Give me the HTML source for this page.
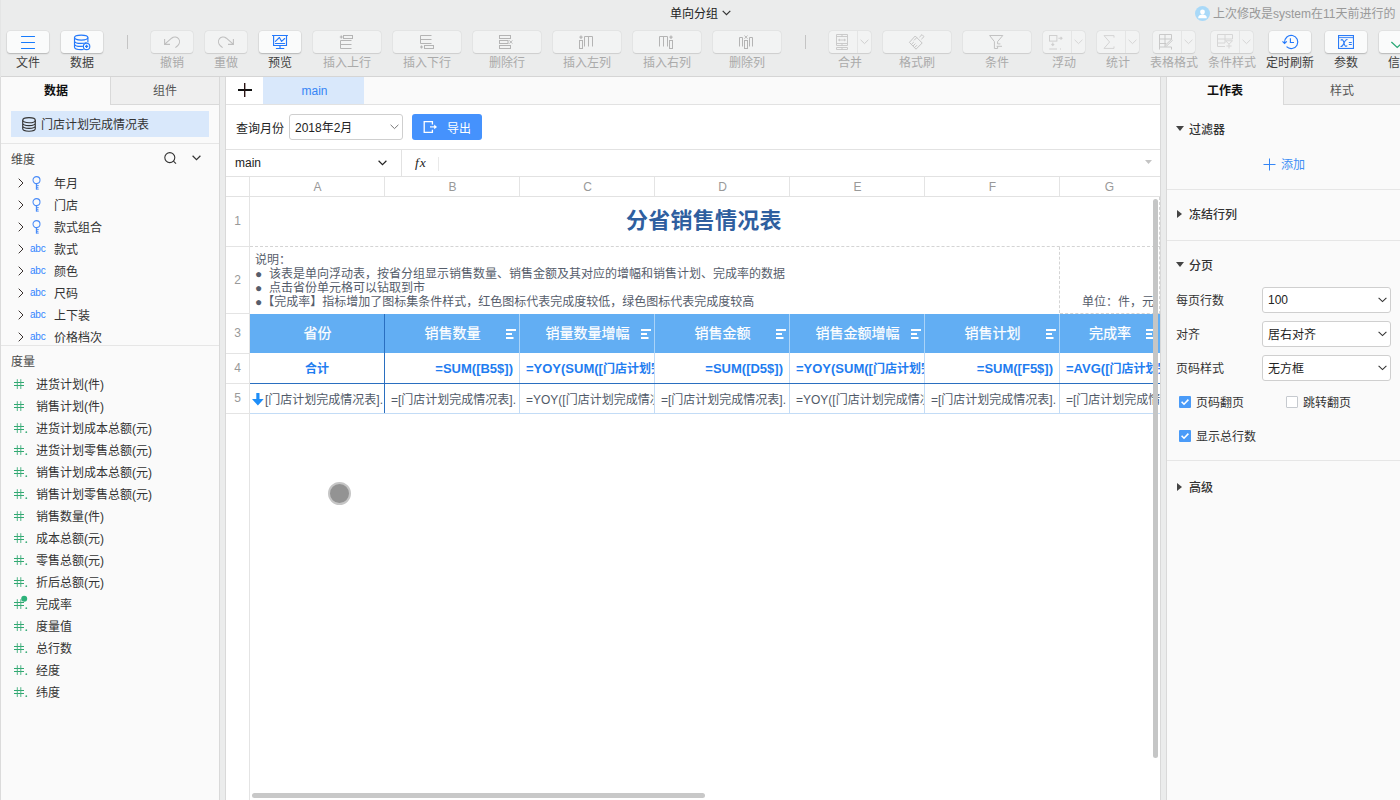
<!DOCTYPE html>
<html lang="zh-CN">
<head>
<meta charset="utf-8">
<title>单向分组</title>
<style>
*{box-sizing:border-box;margin:0;padding:0}
html,body{width:1400px;height:800px;overflow:hidden}
body{position:relative;background:#ebecec;font-family:"Liberation Sans","Noto Sans CJK SC",sans-serif;font-size:12px;color:#333;line-height:1}
.abs{position:absolute}
svg{display:block;overflow:visible}
/* ---------- title bar ---------- */
#title{position:absolute;left:670px;top:7px;font-size:12px;line-height:14px;color:#222;white-space:nowrap}
#lastmod{position:absolute;left:1213px;top:7px;font-size:12px;line-height:14px;color:#999;white-space:nowrap}
#avatar{position:absolute;left:1195px;top:6px;width:15px;height:15px;border-radius:50%;background:#a9d9f8;overflow:hidden}
/* ---------- toolbar ---------- */
.tb{position:absolute;top:30px;height:24px}
.tb::before{content:"";position:absolute;left:0;right:0;top:1px;height:22px;border-radius:3px;background:#f2f3f3;box-shadow:0 0 0 .5px rgba(0,0,0,.05),0 .5px 1px rgba(0,0,0,.10)}
.tb.on::before{background:#fafbfb;box-shadow:0 0 0 .5px rgba(0,0,0,.07),0 1px 1.5px rgba(0,0,0,.20)}
.tb svg{position:absolute;left:50%;top:50%}
.tl{position:absolute;top:56px;height:14px;line-height:14px;font-size:12px;color:#aaa;text-align:center;white-space:nowrap;transform:translateX(-50%)}
.tl.on{color:#404040}
.tsep{position:absolute;top:35px;width:1px;height:14px;background:#c4c4c4}
.split{position:absolute;top:1px;height:22px;width:1px;background:#e4e5e5}
#tbline{position:absolute;left:0;top:76px;width:1400px;height:1px;background:#d5d5d5}
/* ---------- panels ---------- */
#left{position:absolute;left:0;top:77px;width:220px;height:723px;background:#fafafa}
#center{position:absolute;left:225px;top:77px;width:936px;height:723px;background:#fff}
.nt{margin-top:1px;line-height:14px;font-size:12px;color:#565d6b;white-space:nowrap}
.hd{height:39px;line-height:38px;text-align:center;color:#fff;font-size:14px;white-space:nowrap;-webkit-text-stroke:.25px #fff}
.r4{height:29px;line-height:29px;font-size:13px;font-weight:bold;color:#1f7df0;white-space:nowrap;overflow:hidden;padding:0 6px}
.r4 i{font-style:normal;font-size:12px}
.r5{height:30px;line-height:33px;font-size:12px;color:#505a68;white-space:nowrap;overflow:hidden}
#right{position:absolute;left:1166px;top:77px;width:234px;height:723px;background:#fafafa}
.sec{line-height:14px;font-size:12px;color:#333;font-weight:500;margin-top:1px}
.sel{width:129px;height:26px;border:1px solid #cfcfcf;border-radius:3px;background:#fff;line-height:24px;padding-left:5px;color:#222}
.sel.cj{padding-top:1px}
.ptab{position:absolute;top:0;height:28px;line-height:29px;text-align:center;font-size:12px;color:#555}
.ptab.act{font-weight:bold;color:#111}
.ptab.off{background:#efefef;border-left:1px solid #d9d9d9;border-bottom:1px solid #d9d9d9}
[style*="line-height:14px"]{margin-top:1px}
.lat{margin-top:0 !important}
.hline{position:absolute;height:1px;background:#e6e6e6}
.vline{position:absolute;width:1px;background:#e6e6e6}
</style>
</head>
<body>
<!-- TITLE BAR -->
<div id="title">单向分组</div>
<svg class="abs" style="left:722px;top:10px" width="9" height="6" viewBox="0 0 9 6"><path d="M0.7 0.8 L4.5 4.6 L8.3 0.8" fill="none" stroke="#333" stroke-width="1.2"/></svg>
<div id="avatar"><svg width="15" height="15" viewBox="0 0 15 15"><circle cx="7.5" cy="6" r="2.4" fill="#fff"/><path d="M3.2 12.2 C3.2 9.4 5.4 8.6 7.5 8.6 C9.6 8.6 11.8 9.4 11.8 12.2 Z" fill="#fff"/></svg></div>
<div id="lastmod">上次修改是system在11天前进行的</div>

<!-- TOOLBAR -->
<div id="toolbar">
<!-- 文件 -->
<div class="tb on" style="left:7px;width:42px"><svg style="left:14px;top:5px" width="14" height="14" viewBox="0 0 14 14"><path d="M0.5 1.5H13.5M0.5 7.5H13.5M0.5 13.5H13.5" stroke="#167bfd" stroke-width="1.2" stroke-linecap="round" fill="none"/></svg></div>
<div class="tl on" style="left:28px">文件</div>
<!-- 数据 -->
<div class="tb on" style="left:61px;width:42px"><svg style="left:13px;top:4px" width="17" height="17" viewBox="0 0 17 17" fill="none" stroke="#2479fb" stroke-width="1.15"><ellipse cx="7.2" cy="3.6" rx="6.7" ry="2.5"/><path d="M0.5 3.6V13C0.5 14.5 3.4 15.6 7.2 15.6C8 15.6 8.8 15.55 9.6 15.45M13.9 3.6V8.6M0.5 6.9C0.5 8.4 3.4 9.4 7.2 9.4C9.4 9.4 11.4 9.05 12.6 8.5M0.5 9.9C0.5 11.4 3.4 12.4 7.2 12.4C7.9 12.4 8.6 12.36 9.2 12.3"/><circle cx="12.6" cy="12.4" r="3.2" fill="#fafbfb"/><path d="M12.6 10.8V14M11 12.4H14.2" stroke-width="1.3"/></svg></div>
<div class="tl on" style="left:82px">数据</div>
<div class="tsep" style="left:127px"></div>
<!-- 撤销 -->
<div class="tb" style="left:151px;width:42px"><svg style="left:13px;top:6px" width="16" height="12" viewBox="0 0 16 12" fill="none" stroke="#bfbfbf" stroke-width="1.1"><path d="M0.6 3V8.4H6M0.8 8.2L7.6 2.2C9.8 0.4 13 0.6 14.6 2.8C16.2 5 15.6 8 13.6 9.8L11.4 11.6"/></svg></div>
<div class="tl" style="left:172px">撤销</div>
<!-- 重做 -->
<div class="tb" style="left:205px;width:42px"><svg style="left:13px;top:6px" width="16" height="12" viewBox="0 0 16 12" fill="none" stroke="#bfbfbf" stroke-width="1.1"><path d="M15.4 3V8.4H10M15.2 8.2L8.4 2.2C6.2 0.4 3 0.6 1.4 2.8C-0.2 5 0.4 8 2.4 9.8L4.6 11.6"/></svg></div>
<div class="tl" style="left:226px">重做</div>
<!-- 预览 -->
<div class="tb on" style="left:259px;width:42px"><svg style="left:13px;top:5px" width="16" height="14" viewBox="0 0 16 14" fill="none" stroke="#2479fb" stroke-width="1.15" stroke-linecap="round"><path d="M0.5 0.5H15.5M1.6 0.5V10.5H14.5V0.5M3.4 8.5H12.6M8 10.5V13.5M4.4 13.5H11.8"/><path d="M3.4 6.4L7.4 2.5L9.6 6.4L12.7 3.5" stroke-width="1.1" stroke-linejoin="round"/></svg></div>
<div class="tl on" style="left:280px">预览</div>
<!-- 插入上行 -->
<div class="tb" style="left:313px;width:68px"><svg style="left:27px;top:5px" width="14" height="14" viewBox="0 0 14 14" fill="none" stroke="#b4b4b4" stroke-width="1"><rect x="3.5" y="0.5" width="9" height="3"/><path d="M-0.2 2H2.8M1.3 0.5V3.5" stroke-width="1.2"/><path d="M11.5 5.5H0.5V13.5H11.5M0.5 9.5H11.5"/></svg></div>
<div class="tl" style="left:347px">插入上行</div>
<!-- 插入下行 -->
<div class="tb" style="left:393px;width:68px"><svg style="left:27px;top:5px" width="14" height="14" viewBox="0 0 14 14" fill="none" stroke="#b4b4b4" stroke-width="1"><rect x="4.5" y="10.5" width="9" height="3"/><path d="M0 12H3M1.5 10.5V13.5" stroke-width="1.2"/><path d="M11.5 0.5H0.5V8.5H11.5M0.5 4.5H11.5"/></svg></div>
<div class="tl" style="left:427px">插入下行</div>
<!-- 删除行 -->
<div class="tb" style="left:473px;width:68px"><svg style="left:26px;top:5px" width="14" height="14" viewBox="0 0 14 14" fill="none" stroke="#b4b4b4" stroke-width="1"><rect x="0.5" y="0.5" width="11" height="3"/><rect x="0.5" y="5.5" width="8.5" height="3"/><rect x="0.5" y="10.5" width="11" height="3"/><path d="M10.4 5.4L13.4 8.6M13.4 5.4L10.4 8.6" stroke-width="0.9"/></svg></div>
<div class="tl" style="left:507px">删除行</div>
<!-- 插入左列 -->
<div class="tb" style="left:553px;width:68px"><svg style="left:26px;top:5px" width="14" height="14" viewBox="0 0 14 14" fill="none" stroke="#b4b4b4" stroke-width="1"><rect x="0.5" y="5.5" width="3" height="8"/><path d="M0.4 2.2H3.6M2 0.5V3.9" stroke-width="1.2"/><path d="M5.5 11.5V1.5H13.5V11.5M9.5 1.5V11.5"/></svg></div>
<div class="tl" style="left:587px">插入左列</div>
<!-- 插入右列 -->
<div class="tb" style="left:633px;width:68px"><svg style="left:26px;top:5px" width="14" height="14" viewBox="0 0 14 14" fill="none" stroke="#b4b4b4" stroke-width="1"><rect x="10.5" y="5.5" width="3" height="8"/><path d="M10.4 2.2H13.6M12 0.5V3.9" stroke-width="1.2"/><path d="M0.5 11.5V1.5H8.5V11.5M4.5 1.5V11.5"/></svg></div>
<div class="tl" style="left:667px">插入右列</div>
<!-- 删除列 -->
<div class="tb" style="left:713px;width:68px"><svg style="left:26px;top:5px" width="14" height="14" viewBox="0 0 14 14" fill="none" stroke="#b4b4b4" stroke-width="1"><path d="M0.5 11.5V2.5H3.5V11.5M10.5 11.5V2.5H13.5V11.5"/><rect x="5.5" y="5.5" width="3" height="8"/><path d="M5.5 0.5L8.5 3.7M8.5 0.5L5.5 3.7" stroke-width="0.9"/></svg></div>
<div class="tl" style="left:747px">删除列</div>
<div class="tsep" style="left:805px"></div>
<!-- 合并 -->
<div class="tb" style="left:829px;width:42px"><div class="split" style="left:28px"></div><svg style="left:7px;top:4px" width="12" height="16" viewBox="0 0 12 16" fill="none" stroke="#c6c6c6" stroke-width="0.9"><path d="M0.5 0.5H11.5V11.5H0.5ZM0.5 2.5H11.5M0.5 9.5H11.5M6 0.5V2.5M6 9.5V11.5M0.5 13.5H11.5V15.5H0.5ZM6 13.5V15.5M3.4 6H8.6"/><path d="M3.8 4.4L1.9 6L3.8 7.6ZM8.2 4.4L10.1 6L8.2 7.6Z" fill="#c6c6c6" stroke="none"/></svg><svg style="left:31px;top:9px" width="9" height="6" viewBox="0 0 9 6"><path d="M0.6 0.8L4.5 4.6L8.4 0.8" fill="none" stroke="#cfcfcf" stroke-width="1"/></svg></div>
<div class="tl" style="left:850px">合并</div>
<!-- 格式刷 -->
<div class="tb" style="left:883px;width:68px"><svg style="left:26px;top:4px" width="16" height="16" viewBox="0 0 16 16" fill="none" stroke="#c2c2c2" stroke-width="0.95" stroke-linejoin="round"><path d="M10.4 3.2L13 0.6L15 2.6L12.4 5.2M6.2 2L13.2 9L7 15.2L0.4 8.4ZM7.8 3.6L5 6.4M2.4 10.4L4.8 8M4 12L6.4 9.6M5.6 13.6L8 11.2"/></svg></div>
<div class="tl" style="left:917px">格式刷</div>
<!-- 条件 -->
<div class="tb" style="left:963px;width:68px"><svg style="left:26px;top:5px" width="15" height="15" viewBox="0 0 15 15" fill="none" stroke="#c2c2c2" stroke-width="1"><path d="M0.6 0.5H13.8L8.6 6.6V8.9H11.4M5.4 6.6L0.6 0.5M5.4 6.6V13.5H8.6V11.3M7.6 11.3H13"/></svg></div>
<div class="tl" style="left:997px">条件</div>
<!-- 浮动 -->
<div class="tb" style="left:1043px;width:42px"><div class="split" style="left:28px"></div><svg style="left:6px;top:5px" width="14" height="15" viewBox="0 0 14 15" fill="none" stroke="#cfcfcf" stroke-width="1"><rect x="0.5" y="0.5" width="7.4" height="5.6"/><path d="M9.4 3.3H13M11.6 1.9L13 3.3L11.6 4.7M3.8 7.4V10.4M2.4 9.1L3.8 10.5L5.2 9.1" stroke-width="1.1"/><path d="M0.3 14H8M11 14H12" stroke-width="1.1"/></svg><svg style="left:31px;top:9px" width="9" height="6" viewBox="0 0 9 6"><path d="M0.6 0.8L4.5 4.6L8.4 0.8" fill="none" stroke="#d6d6d6" stroke-width="1"/></svg></div>
<div class="tl" style="left:1064px">浮动</div>
<!-- 统计 -->
<div class="tb" style="left:1097px;width:42px"><div class="split" style="left:28px"></div><svg style="left:6px;top:5px" width="12" height="14" viewBox="0 0 12 14" fill="none" stroke="#d4d4d4" stroke-width="1"><path d="M11 2.6V0.6H1L6.6 7L1 13.4H11V11.4"/></svg><svg style="left:31px;top:9px" width="9" height="6" viewBox="0 0 9 6"><path d="M0.6 0.8L4.5 4.6L8.4 0.8" fill="none" stroke="#d6d6d6" stroke-width="1"/></svg></div>
<div class="tl" style="left:1118px">统计</div>
<!-- 表格格式 -->
<div class="tb" style="left:1153px;width:42px"><div class="split" style="left:28px"></div><svg style="left:6px;top:4px" width="14" height="16" viewBox="0 0 14 16" fill="none" stroke="#c6c6c6" stroke-width="0.95"><path d="M0.5 15.5V0.5H12.5V5M0.5 5H12.5M0.5 9.5H7M0.5 13H12.5V15.5M6 0.5V13M6.5 11L12.4 5.4L13.4 6.4L7.6 12Z"/></svg><svg style="left:31px;top:9px" width="9" height="6" viewBox="0 0 9 6"><path d="M0.6 0.8L4.5 4.6L8.4 0.8" fill="none" stroke="#d6d6d6" stroke-width="1"/></svg></div>
<div class="tl" style="left:1174px">表格格式</div>
<!-- 条件样式 -->
<div class="tb" style="left:1211px;width:42px"><div class="split" style="left:28px"></div><svg style="left:6px;top:4px" width="16" height="15" viewBox="0 0 16 15" fill="none" stroke="#d6d6d6" stroke-width="1"><path d="M0.5 12.5V0.5H15.5V5M0.5 5H15.5M0.5 9H8M0.5 12.5H8M8 0.5V9M8.6 6.8H15.5M8.6 6.8L12 10.2V14.5M15.5 6.8L12 10.2M9.4 12H14.6"/></svg><svg style="left:31px;top:9px" width="9" height="6" viewBox="0 0 9 6"><path d="M0.6 0.8L4.5 4.6L8.4 0.8" fill="none" stroke="#d6d6d6" stroke-width="1"/></svg></div>
<div class="tl" style="left:1232px">条件样式</div>
<!-- 定时刷新 -->
<div class="tb on" style="left:1269px;width:42px"><svg style="left:13px;top:4px" width="17" height="16" viewBox="0 0 17 16" fill="none" stroke="#2479fb" stroke-width="1.15"><path d="M2.6 8.4A6.6 6.6 0 1 1 4.53 12.67M0.5 7.3L2.6 9.4L4.8 7.3M8.4 4.2V8.5H12"/></svg></div>
<div class="tl on" style="left:1290px">定时刷新</div>
<!-- 参数 -->
<div class="tb on" style="left:1325px;width:42px"><svg style="left:13px;top:5px" width="16" height="14" viewBox="0 0 16 14" fill="none" stroke="#2b7cf7" stroke-width="1.1"><rect x="0.55" y="0.55" width="14.9" height="12.9"/><path d="M0.6 2.6H15.4" stroke-width="0.9"/><path d="M2.7 5.3C4.5 3.7 5.4 5.4 6 8C6.6 10.6 7.5 12.3 9.3 10.7M9.5 4.5C7.6 4.1 6.8 6 6 8C5.2 10 4.4 11.9 2.5 11.5" stroke-width="1.1"/><path d="M10.8 7.5H13.8M10.8 9.5H13.8" stroke-width="1"/></svg></div>
<div class="tl on" style="left:1346px">参数</div>
<!-- 信息 -->
<div class="tb on" style="left:1379px;width:42px"><svg style="left:12px;top:11px" width="13" height="8" viewBox="0 0 13 8" fill="none" stroke="#2aa876" stroke-width="1.3"><path d="M0.4 1L6.2 6.4L12 1"/></svg></div>
<div class="tl on" style="left:1400px">信息</div>
</div>
<div id="tbline"></div>
<div class="abs" style="left:0;top:0;width:1px;height:77px;background:#e4e5e5"></div>

<!-- LEFT PANEL -->
<div id="left">
<div class="vline" style="left:0;top:0;height:723px;background:#dbdbdb"></div><div class="vline" style="left:219px;top:0;height:723px;background:#d9d9d9"></div>
<div class="ptab act" style="left:1px;width:110px">数据</div><div class="ptab off" style="left:110px;width:109px">组件</div>
<div class="abs" style="left:11px;top:34px;width:198px;height:26px;background:#d9e8fb"></div>
<svg class="abs" style="left:22px;top:40px" width="14" height="15" viewBox="0 0 14 15" fill="none" stroke="#333" stroke-width="1.1"><ellipse cx="7" cy="3.2" rx="6.3" ry="2.6"/><path d="M0.7 3.2V11.6C0.7 13.1 3.5 14.3 7 14.3C10.5 14.3 13.3 13.1 13.3 11.6V3.2M0.7 6C0.7 7.5 3.5 8.6 7 8.6C10.5 8.6 13.3 7.5 13.3 6M0.7 8.8C0.7 10.3 3.5 11.4 7 11.4C10.5 11.4 13.3 10.3 13.3 8.8"/></svg>
<div class="abs" style="left:41px;top:40px;line-height:14px;color:#333">门店计划完成情况表</div>
<div class="hline" style="left:1px;top:66px;width:218px"></div>
<div class="abs" style="left:11px;top:75px;line-height:14px;color:#4a4a4a">维度</div>
<svg class="abs" style="left:164px;top:75px" width="13" height="12" viewBox="0 0 13 12" fill="none" stroke="#333" stroke-width="1.1"><circle cx="5.8" cy="5.6" r="5"/><path d="M9.4 9.2L12 11.6"/></svg>
<svg class="abs" style="left:192px;top:78px" width="9" height="6" viewBox="0 0 9 6"><path d="M0.6 0.8L4.5 4.6L8.4 0.8" fill="none" stroke="#333" stroke-width="1.2"/></svg>
<svg class="abs" style="left:18px;top:101px" width="6" height="10" viewBox="0 0 6 10"><path d="M0.7 0.7L5 5L0.7 9.3" fill="none" stroke="#3a3230" stroke-width="1"/></svg>
<svg class="abs" style="left:32px;top:99px" width="9" height="14" viewBox="0 0 9 14" fill="none" stroke="#4a8cf8" stroke-width="1.05"><circle cx="4.5" cy="4.1" r="3.5"/><path d="M4.5 7.6V13.6" stroke-width="1.3"/><path d="M4.5 9.6H6.8M4.5 11.4H6.4M4.5 13.1H6.8" stroke-width="0.9"/></svg>
<div class="abs" style="left:54px;top:99px;line-height:14px;color:#333">年月</div>
<svg class="abs" style="left:18px;top:123px" width="6" height="10" viewBox="0 0 6 10"><path d="M0.7 0.7L5 5L0.7 9.3" fill="none" stroke="#3a3230" stroke-width="1"/></svg>
<svg class="abs" style="left:32px;top:121px" width="9" height="14" viewBox="0 0 9 14" fill="none" stroke="#4a8cf8" stroke-width="1.05"><circle cx="4.5" cy="4.1" r="3.5"/><path d="M4.5 7.6V13.6" stroke-width="1.3"/><path d="M4.5 9.6H6.8M4.5 11.4H6.4M4.5 13.1H6.8" stroke-width="0.9"/></svg>
<div class="abs" style="left:54px;top:121px;line-height:14px;color:#333">门店</div>
<svg class="abs" style="left:18px;top:145px" width="6" height="10" viewBox="0 0 6 10"><path d="M0.7 0.7L5 5L0.7 9.3" fill="none" stroke="#3a3230" stroke-width="1"/></svg>
<svg class="abs" style="left:32px;top:143px" width="9" height="14" viewBox="0 0 9 14" fill="none" stroke="#4a8cf8" stroke-width="1.05"><circle cx="4.5" cy="4.1" r="3.5"/><path d="M4.5 7.6V13.6" stroke-width="1.3"/><path d="M4.5 9.6H6.8M4.5 11.4H6.4M4.5 13.1H6.8" stroke-width="0.9"/></svg>
<div class="abs" style="left:54px;top:143px;line-height:14px;color:#333">款式组合</div>
<svg class="abs" style="left:18px;top:167px" width="6" height="10" viewBox="0 0 6 10"><path d="M0.7 0.7L5 5L0.7 9.3" fill="none" stroke="#3a3230" stroke-width="1"/></svg>
<div class="abs lat" style="left:30px;top:165px;line-height:14px;font-size:10px;color:#3385ff;letter-spacing:-0.2px">abc</div>
<div class="abs" style="left:54px;top:165px;line-height:14px;color:#333">款式</div>
<svg class="abs" style="left:18px;top:189px" width="6" height="10" viewBox="0 0 6 10"><path d="M0.7 0.7L5 5L0.7 9.3" fill="none" stroke="#3a3230" stroke-width="1"/></svg>
<div class="abs lat" style="left:30px;top:187px;line-height:14px;font-size:10px;color:#3385ff;letter-spacing:-0.2px">abc</div>
<div class="abs" style="left:54px;top:187px;line-height:14px;color:#333">颜色</div>
<svg class="abs" style="left:18px;top:211px" width="6" height="10" viewBox="0 0 6 10"><path d="M0.7 0.7L5 5L0.7 9.3" fill="none" stroke="#3a3230" stroke-width="1"/></svg>
<div class="abs lat" style="left:30px;top:209px;line-height:14px;font-size:10px;color:#3385ff;letter-spacing:-0.2px">abc</div>
<div class="abs" style="left:54px;top:209px;line-height:14px;color:#333">尺码</div>
<svg class="abs" style="left:18px;top:233px" width="6" height="10" viewBox="0 0 6 10"><path d="M0.7 0.7L5 5L0.7 9.3" fill="none" stroke="#3a3230" stroke-width="1"/></svg>
<div class="abs lat" style="left:30px;top:231px;line-height:14px;font-size:10px;color:#3385ff;letter-spacing:-0.2px">abc</div>
<div class="abs" style="left:54px;top:231px;line-height:14px;color:#333">上下装</div>
<svg class="abs" style="left:18px;top:255px" width="6" height="10" viewBox="0 0 6 10"><path d="M0.7 0.7L5 5L0.7 9.3" fill="none" stroke="#3a3230" stroke-width="1"/></svg>
<div class="abs lat" style="left:30px;top:253px;line-height:14px;font-size:10px;color:#3385ff;letter-spacing:-0.2px">abc</div>
<div class="abs" style="left:54px;top:253px;line-height:14px;color:#333">价格档次</div>
<div class="hline" style="left:1px;top:268px;width:218px"></div>
<div class="abs" style="left:11px;top:277px;line-height:14px;color:#4a4a4a">度量</div>
<svg class="abs" style="left:14px;top:302px" width="14" height="10" viewBox="0 0 14 10" fill="none" stroke="#3fae7c" stroke-width="1.1"><path d="M0 3.5H10M0 6.5H10" stroke="#2fa870"/><path d="M3.3 0.2V10M6.8 0.2V10" stroke-width="0.9"/></svg>
<div class="abs" style="left:36px;top:300px;line-height:14px;color:#333">进货计划(件)</div>
<svg class="abs" style="left:14px;top:324px" width="14" height="10" viewBox="0 0 14 10" fill="none" stroke="#3fae7c" stroke-width="1.1"><path d="M0 3.5H10M0 6.5H10" stroke="#2fa870"/><path d="M3.3 0.2V10M6.8 0.2V10" stroke-width="0.9"/></svg>
<div class="abs" style="left:36px;top:322px;line-height:14px;color:#333">销售计划(件)</div>
<svg class="abs" style="left:14px;top:346px" width="14" height="10" viewBox="0 0 14 10" fill="none" stroke="#3fae7c" stroke-width="1.1"><path d="M0 3.5H10M0 6.5H10" stroke="#2fa870"/><path d="M3.3 0.2V10M6.8 0.2V10" stroke-width="0.9"/><circle cx="12.3" cy="9.2" r="0.9" fill="#3fae7c" stroke="none"/></svg>
<div class="abs" style="left:36px;top:344px;line-height:14px;color:#333">进货计划成本总额(元)</div>
<svg class="abs" style="left:14px;top:368px" width="14" height="10" viewBox="0 0 14 10" fill="none" stroke="#3fae7c" stroke-width="1.1"><path d="M0 3.5H10M0 6.5H10" stroke="#2fa870"/><path d="M3.3 0.2V10M6.8 0.2V10" stroke-width="0.9"/><circle cx="12.3" cy="9.2" r="0.9" fill="#3fae7c" stroke="none"/></svg>
<div class="abs" style="left:36px;top:366px;line-height:14px;color:#333">进货计划零售总额(元)</div>
<svg class="abs" style="left:14px;top:390px" width="14" height="10" viewBox="0 0 14 10" fill="none" stroke="#3fae7c" stroke-width="1.1"><path d="M0 3.5H10M0 6.5H10" stroke="#2fa870"/><path d="M3.3 0.2V10M6.8 0.2V10" stroke-width="0.9"/><circle cx="12.3" cy="9.2" r="0.9" fill="#3fae7c" stroke="none"/></svg>
<div class="abs" style="left:36px;top:388px;line-height:14px;color:#333">销售计划成本总额(元)</div>
<svg class="abs" style="left:14px;top:412px" width="14" height="10" viewBox="0 0 14 10" fill="none" stroke="#3fae7c" stroke-width="1.1"><path d="M0 3.5H10M0 6.5H10" stroke="#2fa870"/><path d="M3.3 0.2V10M6.8 0.2V10" stroke-width="0.9"/><circle cx="12.3" cy="9.2" r="0.9" fill="#3fae7c" stroke="none"/></svg>
<div class="abs" style="left:36px;top:410px;line-height:14px;color:#333">销售计划零售总额(元)</div>
<svg class="abs" style="left:14px;top:434px" width="14" height="10" viewBox="0 0 14 10" fill="none" stroke="#3fae7c" stroke-width="1.1"><path d="M0 3.5H10M0 6.5H10" stroke="#2fa870"/><path d="M3.3 0.2V10M6.8 0.2V10" stroke-width="0.9"/></svg>
<div class="abs" style="left:36px;top:432px;line-height:14px;color:#333">销售数量(件)</div>
<svg class="abs" style="left:14px;top:456px" width="14" height="10" viewBox="0 0 14 10" fill="none" stroke="#3fae7c" stroke-width="1.1"><path d="M0 3.5H10M0 6.5H10" stroke="#2fa870"/><path d="M3.3 0.2V10M6.8 0.2V10" stroke-width="0.9"/><circle cx="12.3" cy="9.2" r="0.9" fill="#3fae7c" stroke="none"/></svg>
<div class="abs" style="left:36px;top:454px;line-height:14px;color:#333">成本总额(元)</div>
<svg class="abs" style="left:14px;top:478px" width="14" height="10" viewBox="0 0 14 10" fill="none" stroke="#3fae7c" stroke-width="1.1"><path d="M0 3.5H10M0 6.5H10" stroke="#2fa870"/><path d="M3.3 0.2V10M6.8 0.2V10" stroke-width="0.9"/><circle cx="12.3" cy="9.2" r="0.9" fill="#3fae7c" stroke="none"/></svg>
<div class="abs" style="left:36px;top:476px;line-height:14px;color:#333">零售总额(元)</div>
<svg class="abs" style="left:14px;top:500px" width="14" height="10" viewBox="0 0 14 10" fill="none" stroke="#3fae7c" stroke-width="1.1"><path d="M0 3.5H10M0 6.5H10" stroke="#2fa870"/><path d="M3.3 0.2V10M6.8 0.2V10" stroke-width="0.9"/><circle cx="12.3" cy="9.2" r="0.9" fill="#3fae7c" stroke="none"/></svg>
<div class="abs" style="left:36px;top:498px;line-height:14px;color:#333">折后总额(元)</div>
<svg class="abs" style="left:14px;top:522px" width="14" height="10" viewBox="0 0 14 10" fill="none" stroke="#3fae7c" stroke-width="1.1"><path d="M0 3.5H10M0 6.5H10" stroke="#2fa870"/><path d="M3.3 0.2V10M6.8 0.2V10" stroke-width="0.9"/><circle cx="12.3" cy="9.2" r="0.9" fill="#3fae7c" stroke="none"/><circle cx="10.2" cy="-0.2" r="3" fill="#2db27a" stroke="none"/></svg>
<div class="abs" style="left:36px;top:520px;line-height:14px;color:#333">完成率</div>
<svg class="abs" style="left:14px;top:544px" width="14" height="10" viewBox="0 0 14 10" fill="none" stroke="#3fae7c" stroke-width="1.1"><path d="M0 3.5H10M0 6.5H10" stroke="#2fa870"/><path d="M3.3 0.2V10M6.8 0.2V10" stroke-width="0.9"/><circle cx="12.3" cy="9.2" r="0.9" fill="#3fae7c" stroke="none"/></svg>
<div class="abs" style="left:36px;top:542px;line-height:14px;color:#333">度量值</div>
<svg class="abs" style="left:14px;top:566px" width="14" height="10" viewBox="0 0 14 10" fill="none" stroke="#3fae7c" stroke-width="1.1"><path d="M0 3.5H10M0 6.5H10" stroke="#2fa870"/><path d="M3.3 0.2V10M6.8 0.2V10" stroke-width="0.9"/><circle cx="12.3" cy="9.2" r="0.9" fill="#3fae7c" stroke="none"/></svg>
<div class="abs" style="left:36px;top:564px;line-height:14px;color:#333">总行数</div>
<svg class="abs" style="left:14px;top:588px" width="14" height="10" viewBox="0 0 14 10" fill="none" stroke="#3fae7c" stroke-width="1.1"><path d="M0 3.5H10M0 6.5H10" stroke="#2fa870"/><path d="M3.3 0.2V10M6.8 0.2V10" stroke-width="0.9"/><circle cx="12.3" cy="9.2" r="0.9" fill="#3fae7c" stroke="none"/></svg>
<div class="abs" style="left:36px;top:586px;line-height:14px;color:#333">经度</div>
<svg class="abs" style="left:14px;top:610px" width="14" height="10" viewBox="0 0 14 10" fill="none" stroke="#3fae7c" stroke-width="1.1"><path d="M0 3.5H10M0 6.5H10" stroke="#2fa870"/><path d="M3.3 0.2V10M6.8 0.2V10" stroke-width="0.9"/><circle cx="12.3" cy="9.2" r="0.9" fill="#3fae7c" stroke="none"/></svg>
<div class="abs" style="left:36px;top:608px;line-height:14px;color:#333">纬度</div>
</div>

<!-- CENTER PANEL -->
<div id="center">
<div class="vline" style="left:0;top:0;height:723px;background:#d9d9d9"></div><div class="vline" style="left:935px;top:0;height:723px;background:#d9d9d9"></div>
<div class="abs" style="left:1px;top:0;width:934px;height:27px;background:#fafafa"></div>
<div class="abs" style="left:1px;top:0;width:37px;height:27px;background:#fff"></div>
<svg class="abs" style="left:13px;top:6px" width="14" height="14" viewBox="0 0 14 14"><path d="M0 7H14" stroke="#111" stroke-width="2" fill="none"/><path d="M6.7 0V14" stroke="#2a1414" stroke-width="1.4" fill="none"/></svg>
<div class="abs" style="left:38px;top:0;width:101px;height:27px;background:#d9e8fb;color:#3585f6;text-align:center;padding-left:2px;line-height:28px;font-size:12px">main</div>
<div class="hline" style="left:1px;top:27px;width:934px;background:#e2e2e2"></div>
<div class="abs" style="left:11px;top:44px;line-height:14px;color:#222">查询月份</div>
<div class="abs" style="left:64px;top:37px;width:114px;height:26px;border:1px solid #cfcfcf;border-radius:3px;background:#fff;line-height:27px;padding-left:5px;color:#222">2018年2月<svg class="abs" style="left:100px;top:9px" width="9" height="6" viewBox="0 0 9 6"><path d="M0.6 0.8L4.5 4.6L8.4 0.8" fill="none" stroke="#777" stroke-width="1"/></svg></div>
<div class="abs" style="left:187px;top:37px;width:70px;height:26px;border-radius:3px;background:#4592fd;color:#fff;line-height:26px"><svg class="abs" style="left:11px;top:7px" width="15" height="13" viewBox="0 0 15 13" fill="none" stroke="#fff" stroke-width="1.3"><path d="M9.4 3.4V0.7H1.2V11.4H9.4V8.8"/><path d="M7 5.9H12" stroke-width="1.2"/><path d="M11.2 3.6L14 5.9L11.2 8.2Z" fill="#fff" stroke="none"/></svg><span class="abs" style="left:35px;top:2px">导出</span></div>
<div class="hline" style="left:1px;top:72px;width:934px;background:#e2e2e2"></div>
<div class="abs lat" style="left:10px;top:79px;line-height:14px;color:#222">main</div>
<svg class="abs" style="left:153px;top:83px" width="9" height="6" viewBox="0 0 9 6"><path d="M0.6 0.8L4.5 4.6L8.4 0.8" fill="none" stroke="#222" stroke-width="1.2"/></svg>
<div class="vline" style="left:176px;top:73px;height:26px;background:#e2e2e2"></div>
<div class="abs" style="left:190px;top:78px;line-height:16px;font-size:13.5px;letter-spacing:1px;font-style:italic;font-family:'Liberation Serif',serif;color:#222">fx</div>
<div class="vline" style="left:213px;top:80px;height:14px;background:#e9e9e9"></div>
<svg class="abs" style="left:920px;top:83px" width="7" height="4" viewBox="0 0 7 4"><path d="M0 0H7L3.5 4Z" fill="#c4c4c4"/></svg>
<div class="hline" style="left:1px;top:99px;width:934px;background:#e2e2e2"></div>
<div class="abs lat" style="left:82.5px;top:103px;width:20px;text-align:center;line-height:14px;color:#999;font-size:12px">A</div>
<div class="abs lat" style="left:217.5px;top:103px;width:20px;text-align:center;line-height:14px;color:#999;font-size:12px">B</div>
<div class="abs lat" style="left:352.5px;top:103px;width:20px;text-align:center;line-height:14px;color:#999;font-size:12px">C</div>
<div class="abs lat" style="left:487.5px;top:103px;width:20px;text-align:center;line-height:14px;color:#999;font-size:12px">D</div>
<div class="abs lat" style="left:622.5px;top:103px;width:20px;text-align:center;line-height:14px;color:#999;font-size:12px">E</div>
<div class="abs lat" style="left:757.5px;top:103px;width:20px;text-align:center;line-height:14px;color:#999;font-size:12px">F</div>
<div class="abs lat" style="left:874.5px;top:103px;width:20px;text-align:center;line-height:14px;color:#999;font-size:12px">G</div>
<div class="vline" style="left:24px;top:100px;height:19px;background:#e4e4e4"></div>
<div class="vline" style="left:159px;top:100px;height:19px;background:#e4e4e4"></div>
<div class="vline" style="left:294px;top:100px;height:19px;background:#e4e4e4"></div>
<div class="vline" style="left:429px;top:100px;height:19px;background:#e4e4e4"></div>
<div class="vline" style="left:564px;top:100px;height:19px;background:#e4e4e4"></div>
<div class="vline" style="left:699px;top:100px;height:19px;background:#e4e4e4"></div>
<div class="vline" style="left:834px;top:100px;height:19px;background:#e4e4e4"></div>
<div class="hline" style="left:1px;top:119px;width:934px;background:#e2e2e2"></div>
<div class="vline" style="left:24px;top:120px;height:603px;background:#e4e4e4"></div>
<div class="abs lat" style="left:1px;top:136.5px;width:23px;text-align:center;line-height:14px;color:#999;font-size:12px">1</div>
<div class="abs lat" style="left:1px;top:196px;width:23px;text-align:center;line-height:14px;color:#999;font-size:12px">2</div>
<div class="abs lat" style="left:1px;top:248.5px;width:23px;text-align:center;line-height:14px;color:#999;font-size:12px">3</div>
<div class="abs lat" style="left:1px;top:284px;width:23px;text-align:center;line-height:14px;color:#999;font-size:12px">4</div>
<div class="abs lat" style="left:1px;top:313.5px;width:23px;text-align:center;line-height:14px;color:#999;font-size:12px">5</div>
<div class="hline" style="left:1px;top:169px;width:23px;background:#e4e4e4"></div>
<div class="hline" style="left:1px;top:236px;width:23px;background:#e4e4e4"></div>
<div class="hline" style="left:1px;top:276px;width:23px;background:#e4e4e4"></div>
<div class="hline" style="left:1px;top:306px;width:23px;background:#e4e4e4"></div>
<div class="hline" style="left:1px;top:336px;width:23px;background:#e4e4e4"></div>
<div id="grid" class="abs" style="left:25px;top:120px;width:910px;height:603px;overflow:hidden">
<div class="abs" style="left:0;top:0;width:908px;height:49px;line-height:47px;text-align:center;font-size:22px;letter-spacing:.25px;font-weight:bold;color:#2f5f9f">分省销售情况表</div>
<div class="abs" style="left:0;top:49px;width:910px;height:0;border-top:1px dashed #d4d4d4"></div>
<div class="abs" style="left:809px;top:50px;width:0;height:66px;border-left:1px dashed #d4d4d4"></div>
<div class="abs" style="left:909px;top:0;width:0;height:117px;border-left:1px dashed #d4d4d4"></div>
<div class="abs" style="left:810px;top:116px;width:100px;height:0;border-top:1px dashed #d4d4d4"></div>
<div class="abs nt" style="left:5px;top:55px">说明：</div>
<div class="abs nt" style="left:5px;top:69px">●&nbsp; 该表是单向浮动表，按省分组显示销售数量、销售金额及其对应的增幅和销售计划、完成率的数据</div>
<div class="abs nt" style="left:5px;top:83px">●&nbsp; 点击省份单元格可以钻取到市</div>
<div class="abs nt" style="left:5px;top:97px">●【完成率】指标增加了图标集条件样式，红色图标代表完成度较低，绿色图标代表完成度较高</div>
<div class="abs nt" style="left:832px;top:97px">单位：件，元</div>
<div class="abs" style="left:0;top:117px;width:910px;height:39px;background:#62aef3"></div>
<div class="abs hd" style="left:0px;top:117px;width:135px">省份</div>
<div class="abs hd" style="left:135px;top:117px;width:135px">销售数量</div>
<svg class="abs" style="left:256px;top:132px" width="10" height="10" viewBox="0 0 10 10" fill="#fff"><rect x="0" y="0" width="10" height="2"/><rect x="0" y="4" width="6" height="2"/><rect x="0" y="8" width="7.5" height="2"/></svg>
<div class="abs hd" style="left:270px;top:117px;width:135px">销量数量增幅</div>
<svg class="abs" style="left:391px;top:132px" width="10" height="10" viewBox="0 0 10 10" fill="#fff"><rect x="0" y="0" width="10" height="2"/><rect x="0" y="4" width="6" height="2"/><rect x="0" y="8" width="7.5" height="2"/></svg>
<div class="abs hd" style="left:405px;top:117px;width:135px">销售金额</div>
<svg class="abs" style="left:526px;top:132px" width="10" height="10" viewBox="0 0 10 10" fill="#fff"><rect x="0" y="0" width="10" height="2"/><rect x="0" y="4" width="6" height="2"/><rect x="0" y="8" width="7.5" height="2"/></svg>
<div class="abs hd" style="left:540px;top:117px;width:135px">销售金额增幅</div>
<svg class="abs" style="left:661px;top:132px" width="10" height="10" viewBox="0 0 10 10" fill="#fff"><rect x="0" y="0" width="10" height="2"/><rect x="0" y="4" width="6" height="2"/><rect x="0" y="8" width="7.5" height="2"/></svg>
<div class="abs hd" style="left:675px;top:117px;width:135px">销售计划</div>
<svg class="abs" style="left:796px;top:132px" width="10" height="10" viewBox="0 0 10 10" fill="#fff"><rect x="0" y="0" width="10" height="2"/><rect x="0" y="4" width="6" height="2"/><rect x="0" y="8" width="7.5" height="2"/></svg>
<div class="abs hd" style="left:810px;top:117px;width:100px">完成率</div>
<svg class="abs" style="left:896px;top:132px" width="10" height="10" viewBox="0 0 10 10" fill="#fff"><rect x="0" y="0" width="10" height="2"/><rect x="0" y="4" width="6" height="2"/><rect x="0" y="8" width="7.5" height="2"/></svg>
<div class="abs r4" style="left:0px;top:157px;width:134px;text-align:center"><i>合计</i></div>
<div class="abs r4" style="left:135px;top:157px;width:134px;text-align:right">=SUM([B5$])</div>
<div class="abs r4" style="left:270px;top:157px;width:134px;text-align:left">=YOY(SUM([<i>门店计划完成情况表</i></div>
<div class="abs r4" style="left:405px;top:157px;width:134px;text-align:right">=SUM([D5$])</div>
<div class="abs r4" style="left:540px;top:157px;width:134px;text-align:left">=YOY(SUM([<i>门店计划完成情况表</i></div>
<div class="abs r4" style="left:675px;top:157px;width:134px;text-align:right">=SUM([F5$])</div>
<div class="abs r4" style="left:810px;top:157px;width:134px;text-align:left">=AVG([<i>门店计划完成情况表</i></div>
<div class="abs r5" style="left:0px;top:187px;width:134px;padding-left:15px">[门店计划完成情况表].</div>
<div class="abs r5" style="left:135px;top:187px;width:134px;padding-left:6px">=[门店计划完成情况表].</div>
<div class="abs r5" style="left:270px;top:187px;width:134px;padding-left:6px">=YOY([门店计划完成情况表].</div>
<div class="abs r5" style="left:405px;top:187px;width:134px;padding-left:6px">=[门店计划完成情况表].</div>
<div class="abs r5" style="left:540px;top:187px;width:134px;padding-left:6px">=YOY([门店计划完成情况表].</div>
<div class="abs r5" style="left:675px;top:187px;width:134px;padding-left:6px">=[门店计划完成情况表].</div>
<div class="abs r5" style="left:810px;top:187px;width:134px;padding-left:6px">=[门店计划完成情况表].</div>
<svg class="abs" style="left:2px;top:196px" width="12" height="13" viewBox="0 0 12 13"><path d="M4.3 0H7.5V6H11.7L5.9 12.6L0 6H4.3Z" fill="#1e8ef8"/></svg>
<div class="vline" style="left:269px;top:117px;height:39px;background:#a9d3f8"></div>
<div class="vline" style="left:269px;top:156px;height:61px;background:#c3dcf6"></div>
<div class="vline" style="left:404px;top:117px;height:39px;background:#a9d3f8"></div>
<div class="vline" style="left:404px;top:156px;height:61px;background:#c3dcf6"></div>
<div class="vline" style="left:539px;top:117px;height:39px;background:#a9d3f8"></div>
<div class="vline" style="left:539px;top:156px;height:61px;background:#c3dcf6"></div>
<div class="vline" style="left:674px;top:117px;height:39px;background:#a9d3f8"></div>
<div class="vline" style="left:674px;top:156px;height:61px;background:#c3dcf6"></div>
<div class="vline" style="left:809px;top:117px;height:39px;background:#a9d3f8"></div>
<div class="vline" style="left:809px;top:156px;height:61px;background:#c3dcf6"></div>
<div class="vline" style="left:134px;top:117px;height:100px;background:#2a6fc0"></div>
<div class="hline" style="left:0;top:186px;width:910px;background:#2a6fc0"></div>
<div class="hline" style="left:0;top:216px;width:910px;background:#c3dcf6"></div>
<div class="abs" style="left:78px;top:285px;width:23px;height:23px;border-radius:50%;background:#939393;border:2px solid #c6c6c6"></div>
</div>
<div class="abs" style="left:928px;top:122px;width:5px;height:559px;border-radius:2.5px;background:#c5c6c6"></div>
<div class="abs" style="left:27px;top:716px;width:453px;height:5px;border-radius:3px;background:#c8c8c8"></div>
</div>

<!-- RIGHT PANEL -->
<div id="right">
<div class="vline" style="left:0;top:0;height:723px;background:#d9d9d9"></div>
<div class="ptab act" style="left:1px;width:116px">工作表</div><div class="ptab off" style="left:117px;width:117px">样式</div>
<svg class="abs" style="left:10px;top:49px" width="8" height="5" viewBox="0 0 8 5"><path d="M0 0H8L4 5Z" fill="#444"/></svg>
<div class="abs sec" style="left:23px;top:45px">过滤器</div>
<svg class="abs" style="left:98px;top:81px" width="12" height="12" viewBox="0 0 12 12"><path d="M5.5 0.5V12.5M-0.5 6.5H11.5" stroke="#3586f6" stroke-width="1" fill="none"/></svg>
<div class="abs" style="left:115px;top:80px;line-height:14px;color:#3d8ef5">添加</div>
<div class="hline" style="left:1px;top:112px;width:233px"></div>
<svg class="abs" style="left:11px;top:133px" width="5" height="8" viewBox="0 0 5 8"><path d="M0 0V8L5 4Z" fill="#444"/></svg>
<div class="abs sec" style="left:23px;top:130px">冻结行列</div>
<div class="hline" style="left:1px;top:163px;width:233px"></div>
<svg class="abs" style="left:10px;top:185px" width="8" height="5" viewBox="0 0 8 5"><path d="M0 0H8L4 5Z" fill="#444"/></svg>
<div class="abs sec" style="left:23px;top:181px">分页</div>
<div class="abs" style="left:10px;top:216px;line-height:14px;color:#333">每页行数</div>
<div class="abs sel" style="left:96px;top:210px">100<svg class="abs" style="left:115px;top:9px" width="9" height="6" viewBox="0 0 9 6"><path d="M0.6 0.8L4.5 4.6L8.4 0.8" fill="none" stroke="#333" stroke-width="1.1"/></svg></div>
<div class="abs" style="left:10px;top:250px;line-height:14px;color:#333">对齐</div>
<div class="abs sel cj" style="left:96px;top:244px">居右对齐<svg class="abs" style="left:115px;top:9px" width="9" height="6" viewBox="0 0 9 6"><path d="M0.6 0.8L4.5 4.6L8.4 0.8" fill="none" stroke="#333" stroke-width="1.1"/></svg></div>
<div class="abs" style="left:10px;top:284px;line-height:14px;color:#333">页码样式</div>
<div class="abs sel cj" style="left:96px;top:278px">无方框<svg class="abs" style="left:115px;top:9px" width="9" height="6" viewBox="0 0 9 6"><path d="M0.6 0.8L4.5 4.6L8.4 0.8" fill="none" stroke="#333" stroke-width="1.1"/></svg></div>
<div class="abs" style="left:13px;top:319px;width:12px;height:12px;border-radius:1px;background:#4a9bf8"><svg class="abs" style="left:2px;top:3px" width="8" height="6" viewBox="0 0 8 6"><path d="M0.6 2.8L3 5.2L7.4 0.6" fill="none" stroke="#fff" stroke-width="1.6"/></svg></div>
<div class="abs" style="left:30px;top:318px;line-height:14px;color:#333">页码翻页</div>
<div class="abs" style="left:120px;top:319px;width:12px;height:12px;border-radius:1px;background:#fff;border:1px solid #c6cacf"></div>
<div class="abs" style="left:137px;top:318px;line-height:14px;color:#333">跳转翻页</div>
<div class="abs" style="left:13px;top:353px;width:12px;height:12px;border-radius:1px;background:#4a9bf8"><svg class="abs" style="left:2px;top:3px" width="8" height="6" viewBox="0 0 8 6"><path d="M0.6 2.8L3 5.2L7.4 0.6" fill="none" stroke="#fff" stroke-width="1.6"/></svg></div>
<div class="abs" style="left:30px;top:352px;line-height:14px;color:#333">显示总行数</div>
<div class="hline" style="left:1px;top:383px;width:233px"></div>
<svg class="abs" style="left:11px;top:406px" width="5" height="8" viewBox="0 0 5 8"><path d="M0 0V8L5 4Z" fill="#444"/></svg>
<div class="abs sec" style="left:23px;top:403px">高级</div>
</div>
</body>
</html>
